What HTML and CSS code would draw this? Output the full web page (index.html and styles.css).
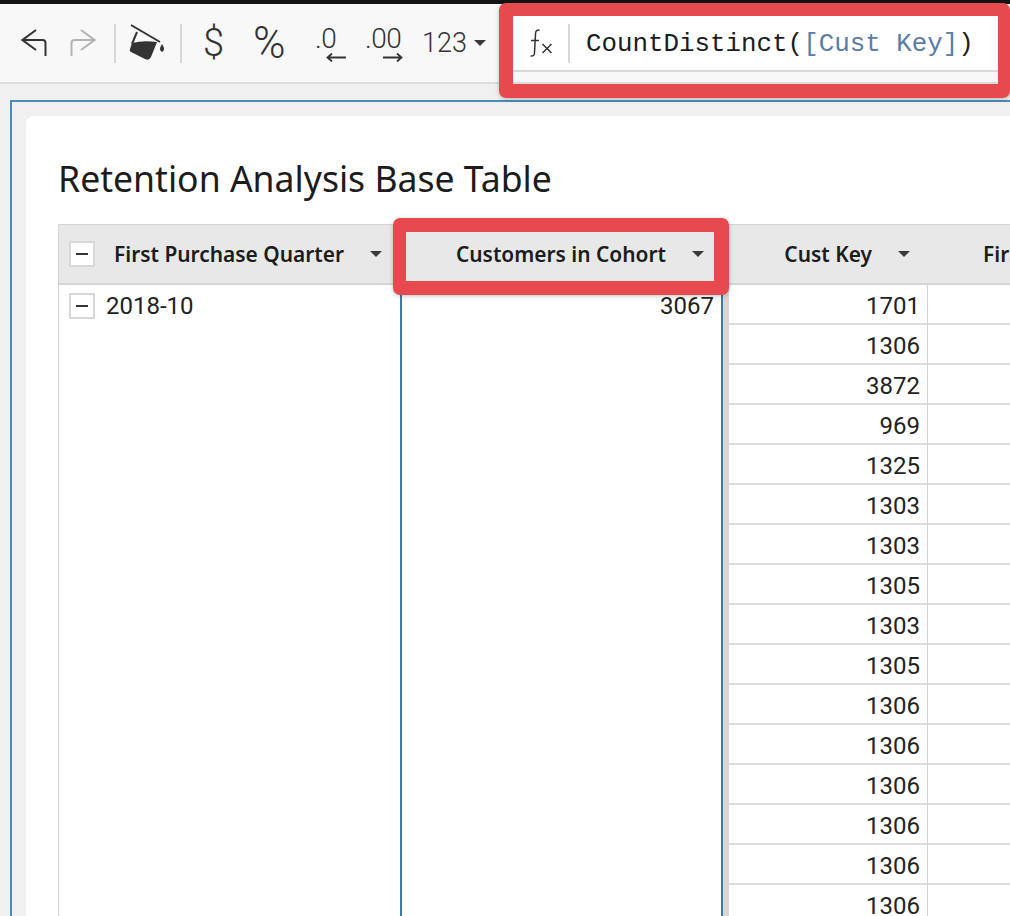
FILE: index.html
```html
<!DOCTYPE html>
<html lang="en">
<head>
    <meta charset="UTF-8">
    <meta name="viewport" content="width=device-width, initial-scale=1.0">
    <title>Retention Analysis Base Table</title>
    <link rel="stylesheet" href="styles.css">
</head>
<body>
    <div class="page">
        <div class="topline"></div>
        <div class="toolbar">
            <div class="tools">
                <svg class="icon undo" width="26" height="28" viewBox="0 0 26 28"><path d="M15 1 1.500 11 15 21M2 11H21.500Q24.500 11 24.500 14V27" fill="none" stroke="#333" stroke-width="2"/></svg>
                <svg class="icon redo" width="26" height="28" viewBox="0 0 26 28"><path d="M11 1 24.500 11 11 21M24 11H4.500Q1.500 11 1.500 14V27" fill="none" stroke="#b4b4b4" stroke-width="2"/></svg>
                <span class="sep sep-a"></span>
                <svg class="icon bucket" width="36" height="38" viewBox="0 0 36 38"><path d="M2 1 31 18" stroke="#333" stroke-width="2" fill="none"/><path d="M8 8 3 20" stroke="#333" stroke-width="2" fill="none"/><path d="M3 19Q14 16 28 18L22 33Q20 37 16 35L2 28Q0 27 1 25Z" fill="#333"/><path d="M33 20Q37 26 33 28Q29 26 33 20Z" fill="#333"/></svg>
                <span class="sep sep-b"></span>
                <span class="tool-text dollar">$</span>
                <span class="tool-text percent">%</span>
                <span class="dec dec-less">
                    <span class="dec-num">.0</span>
                    <svg width="20" height="9" viewBox="0 0 20 9"><path d="M20 4.500H2M6 .5 1.500 4.500 6 8.500" fill="none" stroke="#333" stroke-width="1.800"/></svg>
                </span>
                <span class="dec dec-more">
                    <span class="dec-num">.00</span>
                    <svg width="20" height="9" viewBox="0 0 20 9"><path d="M0 4.500H18M14 .5 18.500 4.500 14 8.500" fill="none" stroke="#333" stroke-width="1.800"/></svg>
                </span>
                <span class="tool-text numfmt">123</span>
                <span class="caret numfmt-caret"></span>
            </div>
            <div class="formula">
                <div class="formula-row">
                    <span class="fx">
                        <svg width="24" height="28" viewBox="0 0 24 28"><path d="M10.500 1Q6.500 .5 6.500 5L5.500 24Q5.500 27.500 1.500 27M2 11.500H10" fill="none" stroke="#333" stroke-width="1.500"/><path d="M13.500 15 22.500 24M22.500 15 13.500 24" fill="none" stroke="#333" stroke-width="1.500"/></svg>
                    </span>
                    <span class="formula-text">CountDistinct(<span class="ref">[Cust Key]</span>)</span>
                </div>
            </div>
        </div>
        <div class="canvas">
            <div class="frame">
                <div class="card">
                    <h1>Retention Analysis Base Table</h1>
                    <div class="table">
                        <div class="col col-quarter">
                            <div class="head">
                                <span class="tree-btn"></span>
                                <span class="head-label">First Purchase Quarter</span>
                                <span class="caret"></span>
                            </div>
                            <div class="group-row">
                                <span class="tree-btn"></span>
                                <span>2018-10</span>
                            </div>
                        </div>
                        <div class="col col-cohort">
                            <div class="head head-right">
                                <span class="head-label">Customers in Cohort</span>
                                <span class="caret"></span>
                            </div>
                            <div class="cohort-value">3067</div>
                        </div>
                        <div class="col col-key">
                            <div class="head head-right">
                                <span class="head-label">Cust Key</span>
                                <span class="caret"></span>
                            </div>
                            <div class="cell">1701</div>
                            <div class="cell">1306</div>
                            <div class="cell">3872</div>
                            <div class="cell">969</div>
                            <div class="cell">1325</div>
                            <div class="cell">1303</div>
                            <div class="cell">1303</div>
                            <div class="cell">1305</div>
                            <div class="cell">1303</div>
                            <div class="cell">1305</div>
                            <div class="cell">1306</div>
                            <div class="cell">1306</div>
                            <div class="cell">1306</div>
                            <div class="cell">1306</div>
                            <div class="cell">1306</div>
                            <div class="cell">1306</div>
                        </div>
                        <div class="col col-next">
                            <div class="head"><span class="head-label">First Purchase Date</span></div>
                            <div class="cell"></div>
                            <div class="cell"></div>
                            <div class="cell"></div>
                            <div class="cell"></div>
                            <div class="cell"></div>
                            <div class="cell"></div>
                            <div class="cell"></div>
                            <div class="cell"></div>
                            <div class="cell"></div>
                            <div class="cell"></div>
                            <div class="cell"></div>
                            <div class="cell"></div>
                            <div class="cell"></div>
                            <div class="cell"></div>
                            <div class="cell"></div>
                            <div class="cell"></div>
                        </div>
                    </div>
                </div>
            </div>
        </div>
        <div class="mark mark-formula"></div>
        <div class="mark mark-column"></div>
    </div>
</body>
</html>
```

FILE: styles.css
```css
body {
    margin: 0;
    font-family: Roboto, sans-serif;
    color: #222;
}
.page {
    position: relative;
    width: 1010px;
    height: 916px;
    overflow: hidden;
    background-color: #f0f0f0;
}
.topline {
    height: 4px;
    background-color: #141414;
}
.toolbar {
    display: flex;
    height: 78px;
    background-color: #f8f8f8;
    border-bottom: 2px solid #dcdcdc;
}
.tools {
    display: flex;
    align-items: center;
    width: 513px;
    flex-shrink: 0;
}
.icon {
    display: block;
    flex-shrink: 0;
}
.undo {
    margin-left: 21px;
}
.redo {
    margin-left: 23px;
}
.sep {
    width: 2px;
    height: 39px;
    background-color: #d6d6d6;
    flex-shrink: 0;
}
.sep-a {
    margin-left: 18px;
}
.bucket {
    margin-left: 13px;
}
.sep-b {
    margin-left: 15px;
}
.tool-text {
    font-weight: 300;
    color: #333;
}
.dollar {
    margin-left: 21px;
    font-size: 38px;
    width: 22px;
}
.percent {
    margin-left: 28px;
    font-size: 44px;
    width: 38px;
}
.numfmt {
    margin-left: 19px;
    font-size: 27px;
}
.numfmt-caret {
    margin-left: 7px;
}
.dec {
    display: flex;
    flex-direction: column;
    align-items: flex-end;
    color: #333;
}
.dec svg {
    display: block;
}
.dec-num {
    align-self: flex-start;
    font-size: 28px;
    font-weight: 300;
    line-height: 28px;
    letter-spacing: -0.5px;
}
.dec-less {
    margin-left: 24px;
    width: 31px;
}
.dec-more {
    margin-left: 19px;
    width: 38px;
}
.caret {
    display: block;
    flex-shrink: 0;
    width: 0;
    height: 0;
    border-left: 6px solid transparent;
    border-right: 6px solid transparent;
    border-top: 6px solid #3a3a3a;
}
.formula {
    flex: 1;
}
.formula-row {
    display: flex;
    align-items: center;
    height: 66px;
    background-color: #fff;
    border-bottom: 2px solid #d8d8d8;
}
.fx {
    display: flex;
    align-items: center;
    width: 57px;
    height: 39px;
    box-sizing: border-box;
    padding-left: 16px;
    margin-top: 12px;
    border-right: 2px solid #d8d8d8;
}
.formula-text {
    margin-left: 16px;
    margin-top: 14px;
    font-family: "Liberation Mono", monospace;
    font-size: 25.85px;
    color: #1c1c1c;
    white-space: nowrap;
}
.ref {
    color: #5a7da8;
}
.canvas {
    padding: 16px 0 0 10px;
}
.frame {
    border: 2px solid #4a8db8;
    border-right: none;
    padding: 14px 0 0 14px;
    height: 900px;
}
.card {
    background-color: #fff;
    border-radius: 8px 0 0 0;
    padding: 35px 0 0 32px;
    height: 900px;
}
h1 {
    margin: 0 0 19px;
    font-family: "Noto Sans", sans-serif;
    font-size: 35.6px;
    font-weight: 400;
    line-height: 54px;
    color: #1c1c1c;
}
.table {
    display: flex;
    width: 1000px;
}
.col {
    flex-shrink: 0;
    box-sizing: border-box;
}
.col-quarter {
    width: 342px;
    border-left: 1px solid #d4d4d4;
}
.col-cohort {
    width: 323px;
    border-left: 2px solid #3f7ca4;
    border-right: 2px solid #3f7ca4;
}
.col-key {
    width: 205px;
    padding-left: 6px;
    background: linear-gradient(to right, #d6d6d6 6px, #fff 6px);
    border-right: 1px solid #d4d4d4;
}
.col-next {
    width: 200px;
}
.head {
    display: flex;
    align-items: center;
    height: 58px;
    background-color: #e8e8e8;
    border-top: 1px solid #d4d4d4;
    border-bottom: 2px solid #d4d4d4;
    font-family: "Noto Sans", sans-serif;
    font-size: 20.9px;
    font-weight: 600;
    color: #1c1c1c;
    white-space: nowrap;
}
.head .caret {
    margin-left: auto;
}
.col-quarter .head {
    padding: 0 18px 0 10px;
}
.col-quarter .head-label {
    margin-left: 19px;
}
.head-right {
    justify-content: flex-end;
    padding-right: 17px;
}
.head-right .caret {
    margin-left: 26px;
}
.col-next .head {
    padding-left: 56px;
    margin-left: -1px;
}
.tree-btn {
    position: relative;
    display: block;
    flex-shrink: 0;
    box-sizing: border-box;
    width: 26px;
    height: 26px;
    background-color: #fff;
    border: 2px solid #d8d8d8;
}
.tree-btn::after {
    content: "";
    position: absolute;
    left: 5px;
    right: 5px;
    top: 10px;
    height: 2px;
    background-color: #333;
}
.group-row {
    display: flex;
    align-items: center;
    gap: 11px;
    height: 41px;
    padding-left: 10px;
    font-size: 24px;
}
.cohort-value {
    height: 40px;
    line-height: 42px;
    padding-right: 7px;
    text-align: right;
    font-size: 24px;
}
.cell {
    box-sizing: border-box;
    height: 40px;
    padding-right: 7px;
    line-height: 42px;
    text-align: right;
    font-size: 24px;
    background-color: #fff;
    border-bottom: 2px solid #dcdcdc;
}
.mark {
    position: absolute;
    box-sizing: border-box;
    border-style: solid;
    border-color: #e64a4f;
    border-radius: 7px;
    box-shadow: 0 1px 4px rgba(0, 0, 0, 0.25);
}
.mark-formula {
    left: 499px;
    top: 3px;
    width: 511px;
    height: 95px;
    border-width: 13px 12px 14px 14px;
}
.mark-column {
    left: 393px;
    top: 218px;
    width: 336px;
    height: 77px;
    border-width: 14px 15px 14px 13px;
}
```
